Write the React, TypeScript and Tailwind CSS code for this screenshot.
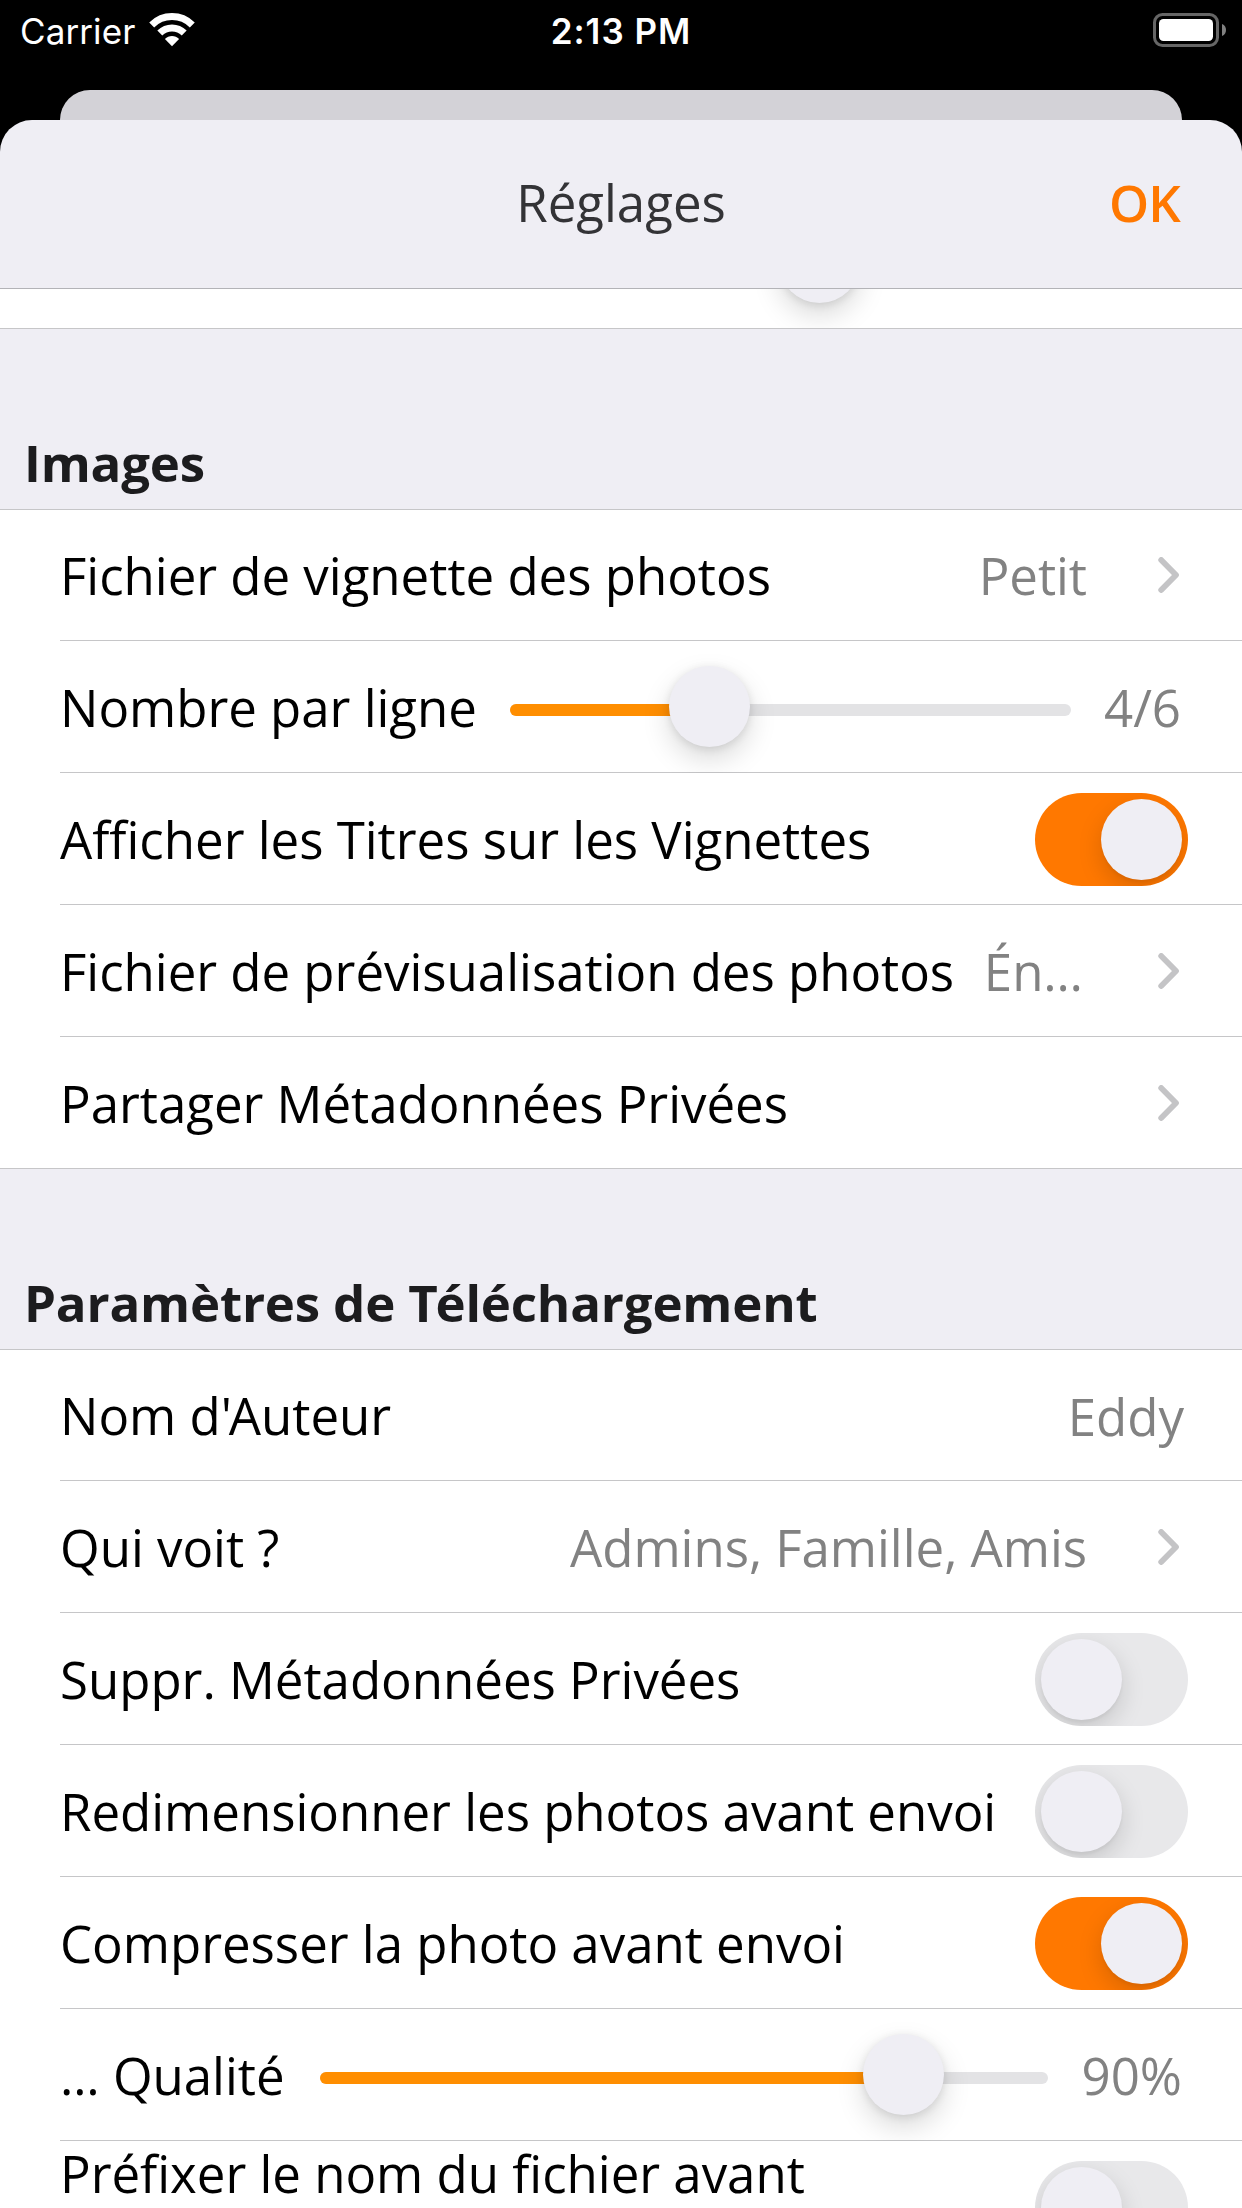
import type { ReactNode } from "react";

function WifiIcon() {
  return (
    <svg width="46" height="34" viewBox="0 0 46 34" fill="none">
      <path d="M23 33.2 L15.9 26.1 C19.6 22.1 26.4 22.1 30.1 26.1 Z" fill="#fff" />
      <path d="M10.8 19.9 C17.6 13.2 28.4 13.2 35.2 19.9" stroke="#fff" strokeWidth="7" />
      <path d="M2.7 12 C14 0.8 32 0.8 43.3 12" stroke="#fff" strokeWidth="7" />
    </svg>
  );
}

function BatteryIcon() {
  return (
    <svg width="74" height="34" viewBox="0 0 74 34" fill="none">
      <rect x="1.5" y="1.5" width="63" height="31" rx="8" stroke="#666" strokeWidth="3" />
      <rect x="6" y="6" width="54" height="22" rx="4.5" fill="#fff" />
      <path d="M69 11 C72 12 73 14.5 73 17 C73 19.5 72 22 69 23 Z" fill="#808080" />
    </svg>
  );
}

function Chevron() {
  return (
    <svg width="22" height="36" viewBox="0 0 22 36" fill="none" className="shrink-0">
      <path
        d="M3.2 3 L18 18 L3.2 33"
        stroke="#c4c4c6"
        strokeWidth="5.8"
        strokeLinecap="round"
        strokeLinejoin="round"
      />
    </svg>
  );
}

function Toggle({ on }: { on?: boolean }) {
  return (
    <div
      className={
        on
          ? "mt-[2px] flex h-[93px] w-[153px] shrink-0 items-center justify-end overflow-hidden rounded-full bg-[#ff7800] p-[6px]"
          : "mt-[2px] flex h-[93px] w-[153px] shrink-0 items-center justify-start overflow-hidden rounded-full bg-[#e8e8ea] p-[6px]"
      }
    >
      <div className="size-[81px] rounded-full bg-[#efeef4] shadow-[0_9px_24px_rgba(0,0,0,0.15),0_3px_3px_rgba(0,0,0,0.04)]" />
    </div>
  );
}

const thumb =
  "size-[81px] rounded-full bg-[#efeef4] shadow-[0_12px_28px_rgba(0,0,0,0.15),0_2px_8px_rgba(0,0,0,0.10)]";

function Slider({ fill }: { fill: number }) {
  return (
    <div className="relative mt-[7px] h-3 flex-1 rounded-full bg-[#e3e3e5]">
      <div className="h-3 rounded-full bg-[#ff8e00]" style={{ width: fill + 40 }} />
      <div className={"absolute -top-[38px] " + thumb} style={{ left: fill }} />
    </div>
  );
}

function Row({
  label,
  first,
  last,
  tall,
  children,
}: {
  label: ReactNode;
  first?: boolean;
  last?: boolean;
  tall?: boolean;
  children?: ReactNode;
}) {
  return (
    <div className={(first ? "h-[131px]" : "h-[132px]") + (last ? "" : " pl-[60px]") + " shrink-0 overflow-hidden bg-white"}>
      <div
        className={
          "flex h-full items-center border-b border-[#c6c6c8] " + (last ? "pl-[60px]" : "")
        }
      >
        <div
          className={
            "shrink-0 whitespace-pre leading-[69px] tracking-[-0.02px] text-black " +
            (tall ? "pb-[67px]" : first ? "" : "pt-[2px]")
          }
        >
          {label}
        </div>
        {children}
      </div>
    </div>
  );
}

function Detail({ text, first, truncated }: { text: string; first?: boolean; truncated?: boolean }) {
  return (
    <div className="ml-auto flex items-center pr-[62px] text-[#828282]">
      <span className={"whitespace-pre tracking-[-0.04px] " + (first ? "" : "pt-[2px]")}>{text}</span>
      <div className={truncated ? "ml-[75px]" : "ml-[71px]"}>
        <Chevron />
      </div>
    </div>
  );
}

function SectionTitle({ children }: { children: ReactNode }) {
  return (
    <div className="h-[181px] shrink-0 border-b border-[#c6c6c8] pl-6 pt-[98px] font-bold leading-[70px] tracking-[-0.18px] text-[#1c1c1e]">
      {children}
    </div>
  );
}

export default function App() {
  return (
    <div className="flex h-[2208px] w-[1242px] flex-col overflow-hidden bg-black font-['Open_Sans',sans-serif] text-[51px] leading-[69px]">
      <div className="grid h-[90px] shrink-0 grid-cols-3 px-5 pt-[9px] font-['Inter',sans-serif] text-[35px] leading-[44px] text-white">
        <div className="flex items-start">
          <span className="tracking-[0.1px]">Carrier</span>
          <span className="ml-[14px] mt-1">
            <WifiIcon />
          </span>
        </div>
        <div className="text-center font-semibold tracking-[1px]">2:13 PM</div>
        <div className="-mr-[5px] mt-1 flex justify-end">
          <BatteryIcon />
        </div>
      </div>
      <div className="mx-[60px] h-[30px] shrink-0 rounded-t-[30px] bg-[#d3d2d7]" />
      <div className="flex flex-1 flex-col overflow-hidden rounded-t-[32px] bg-[#efeef4]">
        <div className="grid h-[169px] shrink-0 grid-cols-3 items-center border-b border-[#b3b3b7] px-[60px] pb-[3px]">
          <span />
          <span className="text-center text-[#333336]">Réglages</span>
          <span className="pr-[2px] text-right font-semibold tracking-[-0.8px] text-[#ff7800]">OK</span>
        </div>
        <div className="h-10 shrink-0 overflow-hidden border-b border-[#c6c6c8] bg-white pl-[779px]">
          <div className={"-mt-[67px] " + thumb} />
        </div>

        <SectionTitle>Images</SectionTitle>
        <Row label="Fichier de vignette des photos" first>
          <Detail text="Petit" first />
        </Row>
        <Row label="Nombre par ligne">
          <div className="ml-[33px] flex flex-1 items-center">
            <Slider fill={159} />
            <span className="ml-[33px] mr-[61px] pt-[2px] text-[#828282]">4/6</span>
          </div>
        </Row>
        <Row label="Afficher les Titres sur les Vignettes">
          <div className="ml-auto mr-[54px]">
            <Toggle on />
          </div>
        </Row>
        <Row label="Fichier de prévisualisation des photos">
          <Detail text="Én…" truncated />
        </Row>
        <Row label="Partager Métadonnées Privées" last>
          <Detail text="" />
        </Row>

        <SectionTitle>
          Paramètres de <span className="tracking-[-2.2px]">T</span>éléchargement
        </SectionTitle>
        <Row
          label={
            <>
              Nom d<span className="tracking-[-3px]">'</span>Auteur
            </>
          }
          first
        >
          <div className="ml-auto pr-[58px] pt-[2px] text-[#828282]">Eddy</div>
        </Row>
        <Row label="Qui voit ?">
          <Detail text="Admins, Famille, Amis" />
        </Row>
        <Row label="Suppr. Métadonnées Privées">
          <div className="ml-auto mr-[54px]">
            <Toggle />
          </div>
        </Row>
        <Row label="Redimensionner les photos avant envoi">
          <div className="ml-auto mr-[54px]">
            <Toggle />
          </div>
        </Row>
        <Row label="Compresser la photo avant envoi">
          <div className="ml-auto mr-[54px]">
            <Toggle on />
          </div>
        </Row>
        <Row label="… Qualité">
          <div className="ml-[35px] flex flex-1 items-center">
            <Slider fill={543} />
            <span className="ml-[34px] mr-[60px] pt-[2px] text-[#828282]">90%</span>
          </div>
        </Row>
        <Row label="Préfixer le nom du fichier avant" tall>
          <div className="ml-auto mr-[54px]">
            <Toggle />
          </div>
        </Row>
      </div>
    </div>
  );
}
